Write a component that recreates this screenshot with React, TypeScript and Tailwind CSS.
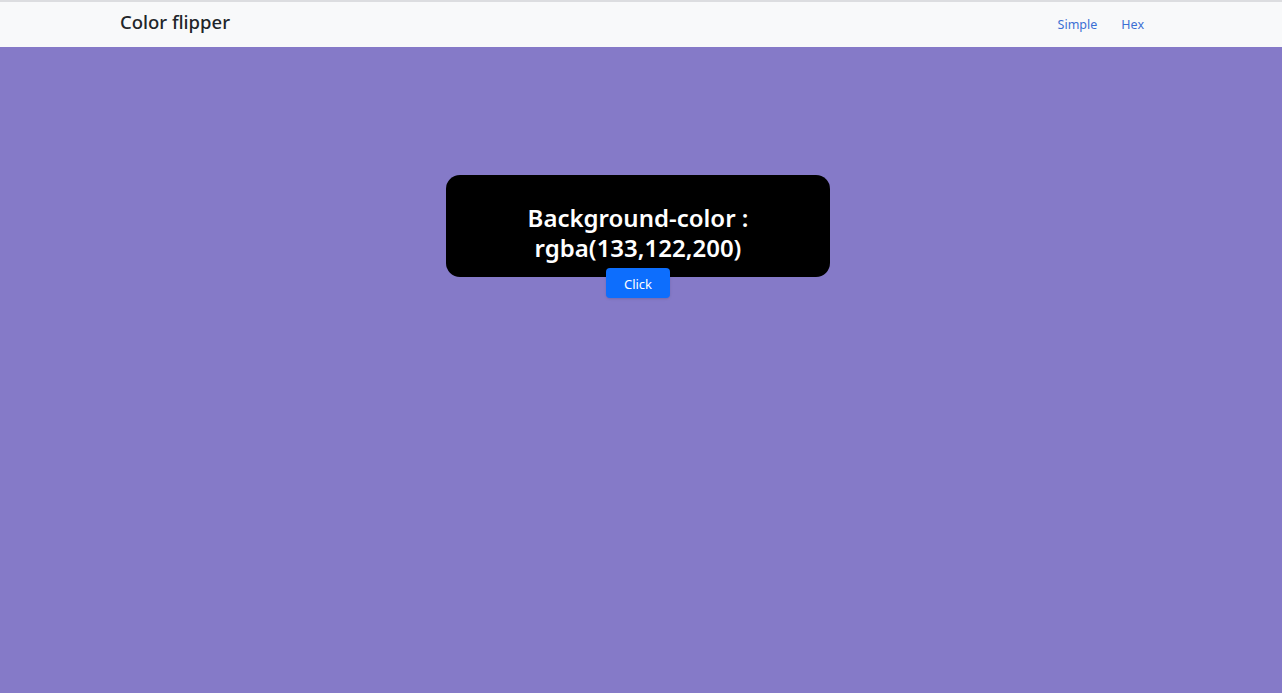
import React, { useState } from 'react';

const colors = [
  [133, 122, 200],
  [240, 128, 128],
  [100, 180, 150],
  [70, 130, 180],
];

const App: React.FC = () => {
  const [idx, setIdx] = useState(0);
  const [r, g, b] = colors[idx];

  return (
    <div
      className="min-h-screen flex flex-col font-['Noto_Sans','Open_Sans',sans-serif]"
      style={{ backgroundColor: `rgb(${r},${g},${b})` }}
    >
      {/* Navbar */}
      <nav className="h-[47px] bg-[#f8f9fa] border-t-2 border-[#dcdde0] flex items-center pl-[120px] pr-[130px]">
        <a className="text-[18.5px] font-medium text-[#212529] leading-none -mt-[4px]">Color flipper</a>
        <div className="ml-auto flex items-center text-[12.5px] text-[#3b6fd4] mt-[2px]">
          <a className="px-2">Simple</a>
          <a className="px-2 ml-[8px]">Hex</a>
        </div>
      </nav>

      {/* Content */}
      <div className="flex flex-col items-center pt-[128px] pr-[6px]">
        <div className="w-[384px] h-[102px] bg-black rounded-[14px] flex items-center justify-center pt-[14px]">
          <h2 className="text-white text-[24px] font-semibold leading-[30px] text-center">
            Background-color :<br />
            rgba({r},{g},{b})
          </h2>
        </div>
        <button
          onClick={() => setIdx((idx + 1) % colors.length)}
          className="-mt-[9px] w-[64px] h-[30px] pt-[3px] bg-[#0d6efd] text-white text-[13px] rounded-[4px] shadow-sm"
        >
          Click
        </button>
      </div>
    </div>
  );
};

export default App;
